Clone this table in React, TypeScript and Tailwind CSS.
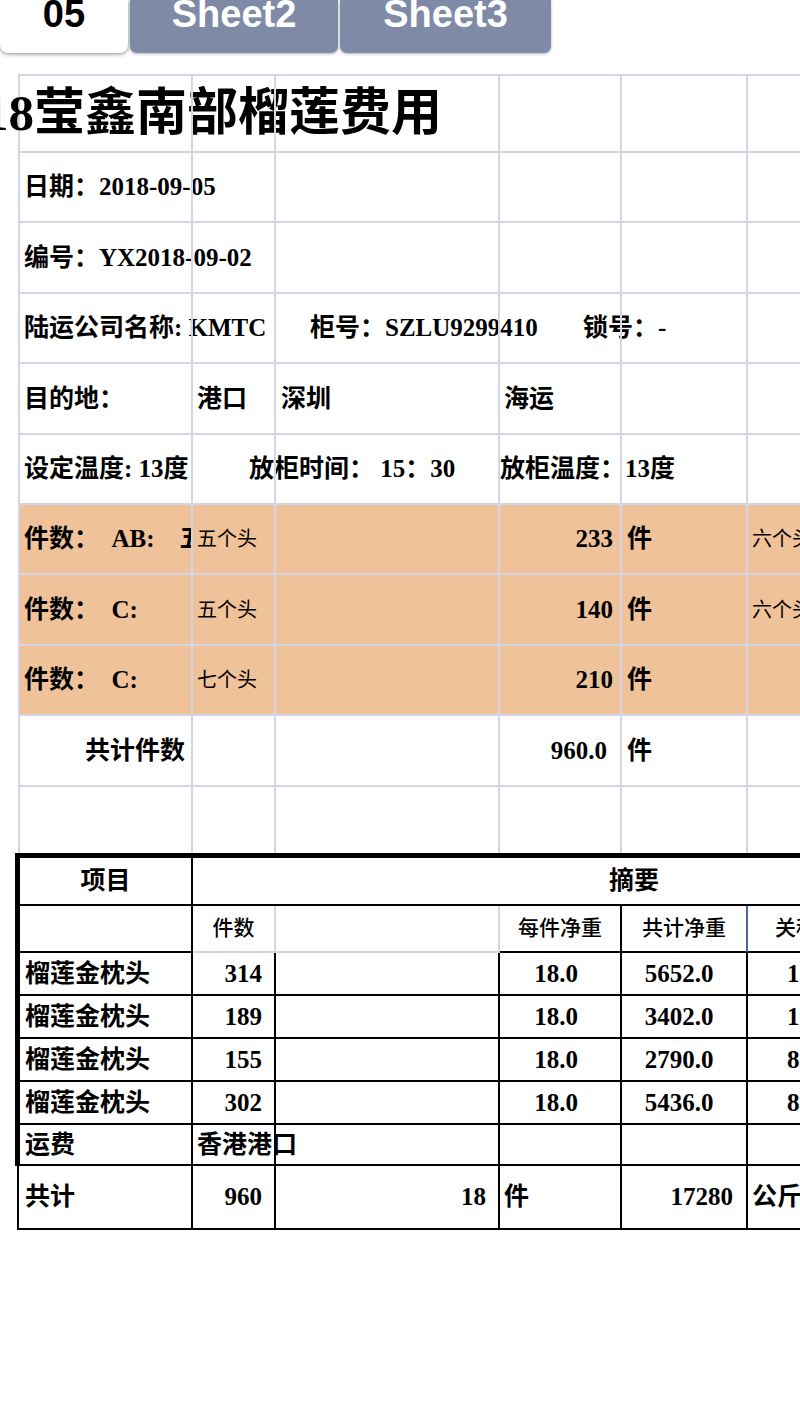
import React from "react"

const grid = "grid grid-cols-[173px_83px_224px_122px_126px_1fr]"
const gridTotal = "grid grid-cols-[174px_83px_224px_122px_126px_1fr]"

type P = { children?: React.ReactNode; className?: string }

// upper sheet cell: light grid lines on top/left, later cells paint over overflow text
function G({ children, className = "" }: P) {
  return (
    <div className={`relative flex items-center whitespace-pre border-l-2 border-t-2 border-[#d6d5e8] ${className}`}>
      {children}
    </div>
  )
}

// bordered table cell (right border added per cell)
function B({ children, className = "" }: P) {
  return (
    <div className={`flex items-center whitespace-pre border-b-2 ${className}`}>
      {children}
    </div>
  )
}

const orange = "bg-[#f0c299]"
const bk = "border-r-2 border-black"

const rows = [
  { n: "314", w: "18.0", t: "5652.0", x: "1017.4" },
  { n: "189", w: "18.0", t: "3402.0", x: "1020.6" },
  { n: "155", w: "18.0", t: "2790.0", x: "837.0" },
  { n: "302", w: "18.0", t: "5436.0", x: "815.4" },
]

function Tabs() {
  return (
    <div className="flex gap-[2px] h-[53px] font-['Liberation_Sans',Arial,sans-serif] font-bold text-[38px] leading-none">
      <div className="w-[128px] bg-white rounded-b-[8px] shadow-[0_1px_4px_rgba(0,0,0,0.45)] flex justify-center text-black">
        <span className="-mt-[5px]">05</span>
      </div>
      <div className="w-[208px] bg-[#7e8aa6] rounded-b-[7px] shadow-[0_1px_3px_rgba(0,0,0,0.3)] flex justify-center text-white">
        <span className="-mt-[5px]">Sheet2</span>
      </div>
      <div className="w-[211px] bg-[#7e8aa6] rounded-b-[7px] shadow-[0_1px_3px_rgba(0,0,0,0.3)] flex justify-center text-white">
        <span className="-mt-[5px]">Sheet3</span>
      </div>
    </div>
  )
}

export default function App() {
  return (
    <div className="w-[800px] h-[1423px] overflow-hidden bg-white text-black font-['Liberation_Serif','Noto_Sans_CJK_SC',serif] font-bold text-[25px]">
      <Tabs />

      <div className="mt-[21px] ml-[18px]">
        <div className={`${grid} h-[77px]`}>
          <G className="pl-1">
            <span className="-ml-[41px] text-[51px] leading-none">18莹鑫南部榴莲费用</span>
          </G>
          <G /><G /><G /><G /><G />
        </div>
        <div className={`${grid} h-[70px]`}>
          <G className="pl-1">日期：2018-09-05</G>
          <G /><G /><G /><G /><G />
        </div>
        <div className={`${grid} h-[71px]`}>
          <G className="pl-1">编号：YX2018-09-02</G>
          <G /><G /><G /><G /><G />
        </div>
        <div className={`${grid} h-[70px]`}>
          <G className="pl-1">陆运公司名称: KMTC</G>
          <G />
          <G className="pl-[34px]">柜号：SZLU9299410</G>
          <G className="pl-[83px]">锁号：-</G>
          <G /><G />
        </div>
        <div className={`${grid} h-[71px]`}>
          <G className="pl-1">目的地：</G>
          <G className="pl-1">港口</G>
          <G className="pl-[5px]">深圳</G>
          <G className="pl-1">海运</G>
          <G /><G />
        </div>
        <div className={`${grid} h-[70px]`}>
          <G className="pl-1">设定温度: 13度</G>
          <G className="pl-[56px]">放柜时间： 15：30</G>
          <G />
          <G>放柜温度：13度</G>
          <G /><G />
        </div>
        <div className={`${grid} h-[70px]`}>
          <G className={`pl-1 ${orange}`}>件数：  AB:    五个头</G>
          <G className={`pl-1 text-[20px] font-normal ${orange}`}>五个头</G>
          <G className={orange} />
          <G className={`justify-end pr-[7px] ${orange}`}>233</G>
          <G className={`pl-[5px] ${orange}`}>件</G>
          <G className={`pl-1 text-[20px] font-normal ${orange}`}>六个头</G>
        </div>
        <div className={`${grid} h-[71px]`}>
          <G className={`pl-1 ${orange}`}>件数：  C:</G>
          <G className={`pl-1 text-[20px] font-normal ${orange}`}>五个头</G>
          <G className={orange} />
          <G className={`justify-end pr-[7px] ${orange}`}>140</G>
          <G className={`pl-[5px] ${orange}`}>件</G>
          <G className={`pl-1 text-[20px] font-normal ${orange}`}>六个头</G>
        </div>
        <div className={`${grid} h-[70px]`}>
          <G className={`pl-1 ${orange}`}>件数：  C:</G>
          <G className={`pl-1 text-[20px] font-normal ${orange}`}>七个头</G>
          <G className={orange} />
          <G className={`justify-end pr-[7px] ${orange}`}>210</G>
          <G className={`pl-[5px] ${orange}`}>件</G>
          <G className={orange} />
        </div>
        <div className={`${grid} h-[71px]`}>
          <G className="justify-end pr-[6px]">共计件数</G>
          <G />
          <G />
          <G className="justify-end pr-[13px]">960.0</G>
          <G className="pl-[5px]">件</G>
          <G />
        </div>
        <div className={`${grid} h-[68px]`}>
          <G /><G /><G /><G /><G /><G />
        </div>
      </div>

      <div className="ml-[15px] border-l-[5px] border-t-[5px] border-black">
        <div className="flex h-[48px]">
          <B className={`w-[173px] shrink-0 justify-center ${bk}`}>项目</B>
          <div className="w-[882px] shrink-0 flex items-center justify-center border-b-2 border-black">摘要</div>
        </div>
        <div className={`${grid} h-[47px] text-[21px] font-medium`}>
          <B className={bk} />
          <B className="justify-center border-r-2 border-[#d6d5e8]">件数</B>
          <B className="border-r-2 border-[#d6d5e8]" />
          <B className={`justify-center ${bk}`}>每件净重</B>
          <B className="justify-center border-r-2 border-b-black border-r-[#4d64a0]">共计净重</B>
          <B className="pl-[27px] border-black">关税</B>
        </div>
        {rows.map((r, i) => (
          <div key={i} className={`${grid} h-[43px]`}>
            <B className={`pl-[5px] ${bk}`}>榴莲金枕头</B>
            <B className={`justify-end pr-[12px] ${bk}`}>{r.n}</B>
            <B className={bk} />
            <B className={`justify-center pr-2 ${bk}`}>{r.w}</B>
            <B className={`justify-center pr-[10px] ${bk}`}>{r.t}</B>
            <B className="pl-[39px] border-black">{r.x}</B>
          </div>
        ))}
        <div className={`${grid} h-[41px]`}>
          <B className={`pl-[5px] ${bk}`}>运费</B>
          <B className={`pl-1 ${bk}`}>香港港口</B>
          <B className={bk} />
          <B className={bk} />
          <B className={bk} />
          <B className="border-black" />
        </div>
      </div>

      <div className={`${gridTotal} ml-[17px] h-[64px] border-l-2 border-black`}>
        <B className={`pl-[6px] ${bk}`}>共计</B>
        <B className={`justify-end pr-[12px] ${bk}`}>960</B>
        <B className={`justify-end pr-[12px] ${bk}`}>18</B>
        <B className={`pl-1 ${bk}`}>件</B>
        <B className={`justify-end pr-[13px] ${bk}`}>17280</B>
        <B className="pl-1 border-black">公斤</B>
      </div>
    </div>
  )
}
